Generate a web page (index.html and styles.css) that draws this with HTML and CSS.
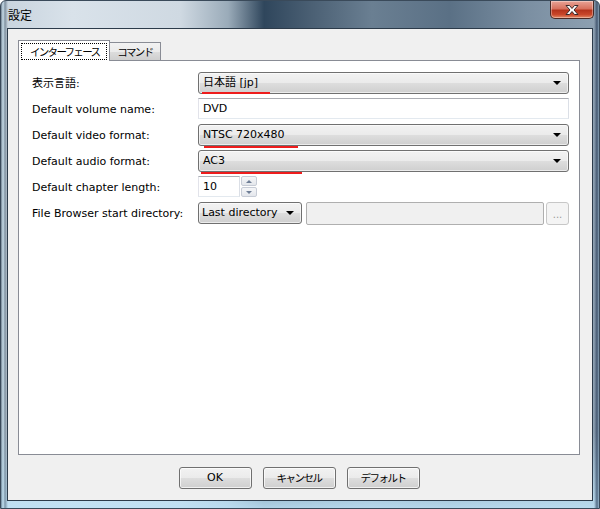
FILE: index.html
```html
<!DOCTYPE html>
<html lang="ja">
<head>
<meta charset="utf-8">
<title>設定</title>
<link rel="stylesheet" href="styles.css">
</head>
<body>
<div class="window">
  <div class="titlebar">
    <span class="title">設定</span>
    <div class="close">
      <svg width="18" height="12" viewBox="0 0 18 12">
        <path d="M3 1.5h3.5l2.5 3 2.5-3H15l-4 4.5 4 4.5h-3.5L9 7.5l-2.5 3H3l4-4.5z" fill="#fff" stroke="#3a2a2a" stroke-width="1" stroke-linejoin="round"/>
      </svg>
    </div>
  </div>
  <div class="client">
    <div class="tabs">
      <div class="tab active"><span class="focus">インターフェース</span></div>
      <div class="tab">コマンド</div>
    </div>
    <div class="pane">
      <div class="form">
        <div class="label">表示言語:</div>
        <div class="combo"><span class="val">日本語 [jp]</span><span class="arrow"></span><span class="mark m1"></span></div>

        <div class="label">Default volume name:</div>
        <div class="edit">DVD</div>

        <div class="label">Default video format:</div>
        <div class="combo"><span class="val">NTSC 720x480</span><span class="arrow"></span><span class="mark m2"></span></div>

        <div class="label">Default audio format:</div>
        <div class="combo"><span class="val">AC3</span><span class="arrow"></span><span class="mark m3"></span></div>

        <div class="label">Default chapter length:</div>
        <div class="spinrow">
          <div class="edit spinedit">10</div>
          <div class="spin">
            <div class="sbtn"><span class="up"></span></div>
            <div class="sbtn"><span class="down"></span></div>
          </div>
        </div>

        <div class="label">File Browser start directory:</div>
        <div class="dirrow">
          <div class="combo small"><span class="val">Last directory</span><span class="arrow"></span></div>
          <div class="edit disabled"></div>
          <div class="browse">...</div>
        </div>
      </div>
    </div>
    <div class="buttons">
      <div class="btn">OK</div>
      <div class="btn jp">キャンセル</div>
      <div class="btn jp">デフォルト</div>
    </div>
  </div>
</div>
</body>
</html>
```
FILE: styles.css
```css
html, body {
  margin: 0;
  padding: 0;
}
body {
  width: 600px;
  height: 509px;
  overflow: hidden;
  font-family: "DejaVu Sans", "Noto Sans CJK JP", sans-serif;
  font-size: 11px;
  color: #000;
}
.window {
  width: 600px;
  height: 509px;
  box-sizing: border-box;
  display: flex;
  flex-direction: column;
  background:
    linear-gradient(90deg, rgba(40,60,80,0.55) 0px, rgba(200,230,245,0.5) 2px, rgba(60,80,100,0.5) 4px, rgba(0,0,0,0) 7px, rgba(0,0,0,0) 593px, rgba(20,40,70,0.6) 596px, rgba(190,225,245,0.6) 599px),
    linear-gradient(180deg, rgba(255,255,255,0) 0%, rgba(255,255,255,0) 85%, rgba(190,225,245,0.9) 100%),
    linear-gradient(90deg, #c7d3dd 0%, #d9e2ea 12%, #cfd9e2 30%, #9aabb9 38%, #2f465c 44%, #4b6074 52%, #6a7f92 62%, #5a7085 75%, #7b8fa2 88%, #8ea1b2 100%);
  border: 1px solid #3a4a5a;
  border-radius: 6px 6px 0 0;
}
.titlebar {
  height: 27px;
  flex: none;
  display: flex;
  align-items: flex-start;
  justify-content: space-between;
}
.title {
  font-family: "Noto Sans CJK JP", sans-serif;
  font-size: 12px;
  line-height: 14px;
  margin: 7px 0 0 7px;
  color: #000;
}
.close {
  width: 44px;
  height: 18px;
  margin-right: 5px;
  box-sizing: border-box;
  border: 1px solid #4a2a25;
  border-top: none;
  border-radius: 0 0 5px 5px;
  background: linear-gradient(180deg, #e9a497 0%, #d7715e 45%, #b5341c 55%, #c9472a 80%, #e38a66 100%);
  display: flex;
  align-items: center;
  justify-content: center;
  box-shadow: inset 0 0 0 1px rgba(255,255,255,0.35);
}
.client {
  flex: 1;
  margin: 0 6px 7px 6px;
  background: #f0f0f0;
  border: 1px solid #2c3b4a;
  display: flex;
  flex-direction: column;
  padding: 11px 12px 0 10px;
  min-height: 0;
}
.tabs {
  display: flex;
  align-items: flex-end;
  height: 20px;
  flex: none;
  position: relative;
  z-index: 2;
}
.tab {
  box-sizing: border-box;
  height: 18px;
  padding: 0 8px 0 7px;
  border: 1px solid #898c95;
  border-bottom: none;
  background: linear-gradient(180deg, #f2f2f2 0%, #ebebeb 50%, #dddddd 51%, #cfcfcf 100%);
  font-family: "Noto Sans CJK JP", sans-serif;
  font-size: 10.5px;
  letter-spacing: -1.7px;
  line-height: 17px;
  margin-left: -1px;
}
.tab.active {
  height: 21px;
  margin-left: 0;
  margin-bottom: -1px;
  background: #fff;
  padding: 2px 2px 0 2px;
  position: relative;
  z-index: 3;
}
.focus {
  display: block;
  border: 1px dotted #000;
  padding: 0 7px 0 8px;
  line-height: 15px;
}
.pane {
  flex: 1;
  background: #fff;
  border: 1px solid #898c95;
  padding: 11px 10px 0 13px;
  min-height: 0;
}
.form {
  display: grid;
  grid-template-columns: 166px 1fr;
  grid-auto-rows: 22px;
  row-gap: 4px;
  align-items: center;
}
.label {
  white-space: nowrap;
  line-height: 22px;
  padding-top: 2px;
}
.combo {
  position: relative;
  height: 22px;
  box-sizing: border-box;
  border: 1px solid #707070;
  border-radius: 3px;
  background: linear-gradient(180deg, #f2f2f2 0%, #ebebeb 48%, #dddddd 52%, #cfcfcf 100%);
  display: flex;
  align-items: center;
  justify-content: space-between;
  padding: 0 7px 0 4px;
  box-shadow: inset 0 0 0 1px rgba(255,255,255,0.6);
}
.val {
  white-space: nowrap;
  line-height: 20px;
}
.arrow {
  width: 0;
  height: 0;
  border-left: 4px solid transparent;
  border-right: 4px solid transparent;
  border-top: 4px solid #000;
}
.mark {
  position: absolute;
  height: 2px;
  background: #ee1c1c;
}
.m1 { left: 3px; width: 68px; bottom: -1px; }
.m2 { left: 5px; width: 94px; bottom: -3px; }
.m3 { left: 2px; width: 101px; bottom: -3px; }
.edit {
  height: 21px;
  box-sizing: border-box;
  border: 1px solid #abadb3;
  border-color: #abadb3 #dbdfe6 #e3e9ef #e2e3ea;
  background: #fff;
  padding: 0 4px;
  line-height: 19px;
  align-self: start;
}
.spinrow {
  display: flex;
  align-items: flex-start;
  height: 22px;
}
.spinedit {
  width: 42px;
}
.spin {
  display: flex;
  flex-direction: column;
  gap: 1px;
  margin-left: 1px;
}
.sbtn {
  width: 16px;
  height: 10px;
  box-sizing: border-box;
  border: 1px solid #c7ccd6;
  border-radius: 2px;
  background: linear-gradient(180deg, #f5f6f8 0%, #e4e7ec 100%);
  display: flex;
  align-items: center;
  justify-content: center;
}
.up {
  width: 0; height: 0;
  border-left: 3px solid transparent;
  border-right: 3px solid transparent;
  border-bottom: 3px solid #6f7e96;
}
.down {
  width: 0; height: 0;
  border-left: 3px solid transparent;
  border-right: 3px solid transparent;
  border-top: 3px solid #6f7e96;
}
.dirrow {
  display: flex;
  align-items: center;
  height: 22px;
}
.combo.small {
  width: 104px;
  flex: none;
  padding: 0 7px 0 3px;
}
.edit.disabled {
  flex: 1;
  height: 23px;
  margin-left: 4px;
  background: #f0f0f0;
  border: 1px solid #afafaf;
  border-radius: 2px;
  align-self: center;
}
.browse {
  width: 23px;
  height: 23px;
  box-sizing: border-box;
  margin-left: 2px;
  border: 1px solid #c7c7c7;
  border-radius: 3px;
  background: #f4f4f4;
  color: #9a9a9a;
  text-align: center;
  line-height: 23px;
  font-size: 10px;
}
.buttons {
  flex: none;
  display: flex;
  justify-content: center;
  gap: 11px;
  padding: 12px 0 11px 0;
}
.btn {
  width: 73px;
  height: 22px;
  box-sizing: border-box;
  border: 1px solid #707070;
  border-radius: 3px;
  background: linear-gradient(180deg, #f2f2f2 0%, #ebebeb 48%, #dddddd 52%, #cfcfcf 100%);
  box-shadow: inset 0 0 0 1px rgba(255,255,255,0.7);
  text-align: center;
  line-height: 20px;
  font-size: 11px;
}
.btn.jp {
  font-family: "Noto Sans CJK JP", sans-serif;
  font-size: 10.5px;
  letter-spacing: -1.5px;
}
```
